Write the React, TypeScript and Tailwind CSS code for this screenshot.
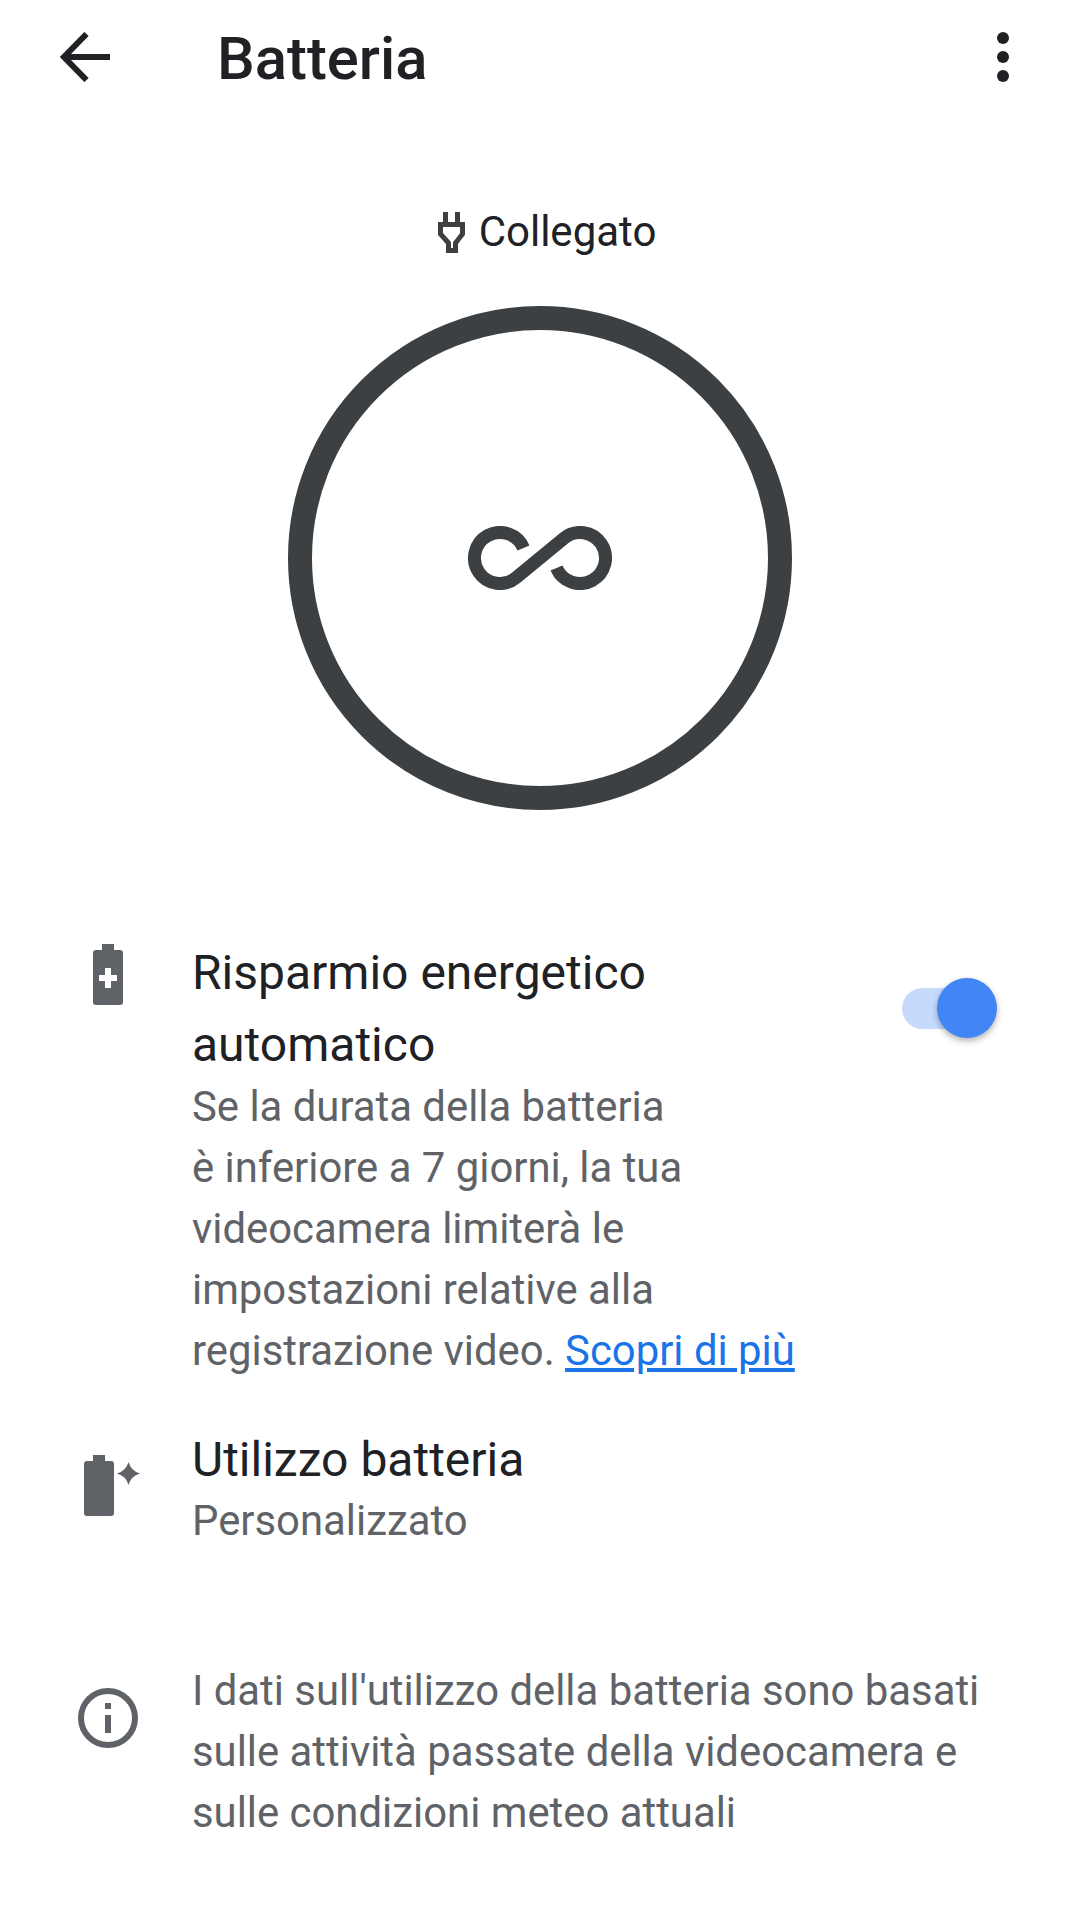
const BackArrow = () => (
  <svg width="50" height="50" viewBox="0 0 50 50" fill="none" stroke="#202124" strokeWidth="6">
    <path d="M50 25H5M26.500 2 4 25 26.500 48" />
  </svg>
);

const Kebab = () => (
  <svg width="14" height="50" viewBox="0 0 14 50" fill="#202124">
    <circle cx="7" cy="6" r="6" />
    <circle cx="7" cy="25" r="6" />
    <circle cx="7" cy="44" r="6" />
  </svg>
);

const Plug = () => (
  <svg width="27" height="41" viewBox="0 0 27 41" fill="none" stroke="#3c4043" strokeWidth="5">
    <path d="M7.5 0v13M19.5 0v13" />
    <path d="M2.5 12.5h22V22l-7 9v7.5h-7V31l-8-9z" />
  </svg>
);

const Infinity8 = () => (
  <svg width="144" height="64" viewBox="468 525.5 144 64" fill="none" stroke="#3c4043" strokeWidth="13">
    <path d="M523.5 547.6A25.5 25.5 0 1 0 516.3 577.1L563.7 537.9A25.5 25.5 0 1 1 556.5 567.4" />
  </svg>
);

const BatteryPlus = () => (
  <svg width="30" height="61" viewBox="0 0 30 61" fill="#5f6368">
    <path fillRule="evenodd" d="M9 0h12v6h6a3 3 0 0 1 3 3v49a3 3 0 0 1-3 3H3a3 3 0 0 1-3-3V9a3 3 0 0 1 3-3h6zM12 24v7H6v6h6v7h6v-7h6v-6h-6v-7z" />
  </svg>
);

const BatteryStar = () => (
  <svg width="56" height="61" viewBox="0 0 56 61" fill="#5f6368">
    <path d="M9 0h12v6h6a3 3 0 0 1 3 3v49a3 3 0 0 1-3 3H3a3 3 0 0 1-3-3V9a3 3 0 0 1 3-3h6z" />
    <path d="M44.500 7Q47 16 56 18.500 47 21 44.500 30 42 21 33 18.500 42 16 44.500 7z" />
  </svg>
);

const InfoIcon = () => (
  <svg width="60" height="60" viewBox="0 0 60 60" fill="#5f6368">
    <circle cx="30" cy="30" r="27" fill="none" stroke="#5f6368" strokeWidth="6" />
    <rect x="27" y="15" width="6" height="6" />
    <rect x="27" y="27" width="6" height="18" />
  </svg>
);

export default function App() {
  return (
    <div className="w-[1080px] h-[1920px] bg-white overflow-hidden font-['Roboto',sans-serif] text-[#202124]">
      <header className="h-[114px] flex items-center pl-[60px] pr-[70px]">
        <BackArrow />
        <h1 className="ml-[107px] pt-[4px] text-[59.8px] leading-[64px] font-medium flex-1">Batteria</h1>
        <Kebab />
      </header>

      <div className="mt-[93px] h-[50px] pl-[14px] flex items-center justify-center gap-[14px]">
        <Plug />
        <span className="text-[42px] leading-[50px]">Collegato</span>
      </div>

      <div className="mt-[49px] mx-auto w-[504px] h-[504px] rounded-full border-[24px] border-[#3c4043] flex items-center justify-center">
        <Infinity8 />
      </div>

      <section className="mt-[127px] flex pl-[93px] pr-[83px]">
        <div className="w-[99px] pt-[7px] shrink-0">
          <BatteryPlus />
        </div>
        <div className="flex-1">
          <div className="text-[48px] leading-[72px]">
            Risparmio energetico
            <br />
            automatico
          </div>
          <p className="-mt-[5px] text-[41.85px] leading-[61px] text-[#5f6368]">
            Se la durata della batteria
            <br />
            è inferiore a 7 giorni, la tua
            <br />
            videocamera limiterà le
            <br />
            impostazioni relative alla
            <br />
            registrazione video.{" "}
            <a className="text-[#1a73e8] underline">Scopri di più</a>
          </p>
        </div>
        <div className="relative w-[95px] h-[60px] mt-[41px] shrink-0 flex items-center">
          <div className="w-[84px] h-[41px] rounded-full bg-[#c6dafc]" />
          <div className="absolute left-[35px] top-0 w-[60px] h-[60px] rounded-full bg-[#4285f4] shadow-[0_3px_6px_rgba(0,0,0,0.3)]" />
        </div>
      </section>

      <section className="mt-[43px] flex pl-[84px]">
        <div className="w-[108px] pt-[31px] shrink-0">
          <BatteryStar />
        </div>
        <div>
          <div className="text-[48px] leading-[72px]">Utilizzo batteria</div>
          <div className="text-[41.85px] leading-[50px] text-[#5f6368]">Personalizzato</div>
        </div>
      </section>

      <section className="mt-[114px] flex pl-[78px]">
        <div className="w-[114px] pt-[28px] shrink-0">
          <InfoIcon />
        </div>
        <p className="text-[41.85px] leading-[61px] text-[#5f6368]">
          I dati sull'utilizzo della batteria sono basati
          <br />
          sulle attività passate della videocamera e
          <br />
          sulle condizioni meteo attuali
        </p>
      </section>
    </div>
  );
}
